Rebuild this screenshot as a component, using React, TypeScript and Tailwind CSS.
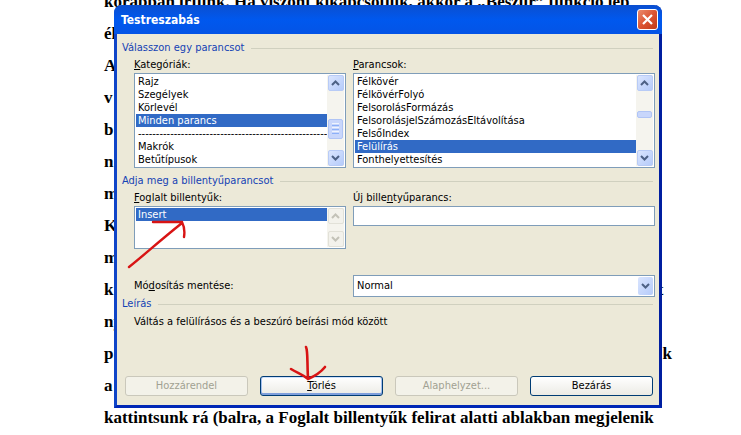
import { useState, type ReactNode } from "react";

const documentLines = [
  { start: "korábban írtunk. Ha viszont kikapcsoljuk, akkor a „Beszúr” funkció lép", end: "" },
  { start: "él", end: "" },
  { start: "A", end: "" },
  { start: "v", end: "" },
  { start: "b", end: "" },
  { start: "n", end: "" },
  { start: "m", end: "" },
  { start: "K", end: "" },
  { start: "m", end: "" },
  { start: "k", end: "t\u00a0\u00a0" },
  { start: "ny", end: "" },
  { start: "p", end: "k" },
  { start: "a", end: "" },
  { start: "kattintsunk rá (balra, a Foglalt billentyűk felirat alatti ablakban megjelenik", end: "" },
];

const categories = [
  "Rajz",
  "Szegélyek",
  "Körlevél",
  "Minden parancs",
  "-----------------------------------------------------",
  "Makrók",
  "Betűtípusok",
];

const commands = [
  "Félkövér",
  "FélkövérFolyó",
  "FelsorolásFormázás",
  "FelsorolásjelSzámozásEltávolítása",
  "FelsőIndex",
  "Felülírás",
  "Fonthelyettesítés",
];

function Chevron({ up = false, muted = false }: { up?: boolean; muted?: boolean }) {
  return (
    <svg viewBox="0 0 9 6" className={`h-[6px] w-[9px] ${up ? "rotate-180" : ""}`} aria-hidden="true">
      <path d="M1 1 L4.5 4.5 L8 1" fill="none" stroke={muted ? "#c3c2b8" : "#4d6185"} strokeWidth="2" />
    </svg>
  );
}

function ScrollButton({ up = false, disabled = false }: { up?: boolean; disabled?: boolean }) {
  return (
    <button
      type="button"
      disabled={disabled}
      aria-label={up ? "Fel" : "Le"}
      className={`flex h-4 w-4 shrink-0 items-center justify-center rounded-xs border ${
        disabled ? "border-[#e2e1d8] bg-[#f3f2ec]" : "border-[#b8cbf6] bg-linear-to-br from-[#dae5fe] to-[#b5cbfa]"
      }`}
    >
      <Chevron up={up} muted={disabled} />
    </button>
  );
}

type ListBoxProps = {
  id: string;
  items: string[];
  initial: string;
  rows: number;
  disabled?: boolean;
  thumb?: ReactNode;
};

function ListBox({ id, items, initial, rows, disabled = false, thumb }: ListBoxProps) {
  const [value, setValue] = useState(initial);

  return (
    <div className="flex border border-[#7f9db9] bg-white p-px">
      <select
        id={id}
        size={rows}
        value={value}
        onChange={(e) => setValue(e.target.value)}
        className="block min-w-0 flex-1 self-start overflow-hidden bg-white p-0 outline-none [scrollbar-width:none]"
      >
        {items.map((item) => (
          <option
            key={item}
            value={item}
            className="h-[13px] min-h-0 overflow-hidden p-0 pl-[2px] leading-[13px] checked:bg-linear-to-r checked:from-[#316ac5] checked:to-[#316ac5] checked:text-white"
          >
            {item}
          </option>
        ))}
      </select>
      <div className="flex w-[17px] flex-col items-center justify-between bg-[#f5f4ee]">
        <ScrollButton up disabled={disabled} />
        {thumb}
        <ScrollButton disabled={disabled} />
      </div>
    </div>
  );
}

function GroupTitle({ children }: { children: ReactNode }) {
  return (
    <div className="flex h-[14px] items-center gap-[7px] pr-[6px] pl-[5px] text-[#1442b4]">
      <h2>{children}</h2>
      <span className="h-px flex-1 bg-[#d0d0bf]" />
    </div>
  );
}

function PushButton({ children, disabled = false, primary = false }: { children: ReactNode; disabled?: boolean; primary?: boolean }) {
  const look = disabled
    ? "border-[#cac8bb] bg-[#f3f2e9] text-[#a1a192]"
    : primary
      ? "border-[#003c74] bg-linear-to-b from-white to-[#ecebe5] shadow-[inset_0_-2px_0_#7f9fdc,inset_1px_0_0_#a5c0ee,inset_-1px_0_0_#a5c0ee,inset_0_1px_0_#cee0fb]"
      : "border-[#003c74] bg-linear-to-b from-white to-[#ecebe5]";

  return (
    <button type="button" disabled={disabled} className={`h-5 flex-1 rounded-[3px] border leading-4 ${look}`}>
      {children}
    </button>
  );
}

export default function App() {
  const [target, setTarget] = useState("Normal");

  return (
    <main className="relative h-screen overflow-hidden bg-white">
      <div className="-mt-[14px] pr-[69px] pl-[104px] font-['Liberation_Serif',serif] text-[17px] leading-8 font-bold whitespace-nowrap text-black">
        {documentLines.map((line, i) => (
          <p key={i} className="flex justify-between">
            <span>{line.start}</span>
            <span>{line.end}</span>
          </p>
        ))}
      </div>

      <section
        role="dialog"
        aria-labelledby="dialog-title"
        className="absolute top-[5px] right-[79px] left-[114px] rounded-t-lg border-r-[3px] border-b-[3px] border-l-[3px] border-[#0f45c8] border-r-[#001ea0] border-b-[#0027b5] bg-[#ece9d8] font-['DejaVu_Sans_Condensed','DejaVu_Sans',sans-serif] text-[11px] leading-[14px] text-black"
      >
        <header className="-mx-[3px] flex h-[29px] items-center justify-between rounded-t-lg bg-linear-to-b from-[#0a4fd0] via-[#0058ee] to-[#0454e6] pr-1 pl-[7px] text-white">
          <h1 id="dialog-title" className="text-[12px] font-bold">
            Testreszabás
          </h1>
          <button
            type="button"
            aria-label="Bezárás"
            className="flex h-[21px] w-[21px] items-center justify-center rounded-[3px] border border-white bg-linear-to-br from-[#e98a6c] via-[#dc5432] to-[#c03a18]"
          >
            <svg viewBox="0 0 11 11" className="h-[11px] w-[11px]" aria-hidden="true">
              <path d="M1 1 L10 10 M10 1 L1 10" stroke="white" strokeWidth="2.2" />
            </svg>
          </button>
        </header>

        <form className="pt-[7px] pb-[9px]" onSubmit={(e) => e.preventDefault()}>
          <GroupTitle>Válasszon egy parancsot</GroupTitle>
          <div className="mt-[2px] grid grid-cols-[212px_1fr] gap-x-[7px] pr-1 pl-[17px]">
            <label htmlFor="categories" className="leading-4">
              <u>K</u>ategóriák:
            </label>
            <label htmlFor="commands" className="leading-4">
              <u>P</u>arancsok:
            </label>
            <ListBox
              id="categories"
              items={categories}
              initial="Minden parancs"
              rows={7}
              thumb={
                <div className="mt-[16px] flex h-5 w-[15px] flex-col items-center justify-center gap-px rounded-xs border border-[#b0c4f5] bg-[#c8d6fb]">
                  <span className="h-px w-[7px] bg-[#eef4fe]" />
                  <span className="h-px w-[7px] bg-[#8cb0f8]" />
                  <span className="h-px w-[7px] bg-[#eef4fe]" />
                  <span className="h-px w-[7px] bg-[#8cb0f8]" />
                  <span className="h-px w-[7px] bg-[#eef4fe]" />
                  <span className="h-px w-[7px] bg-[#8cb0f8]" />
                </div>
              }
            />
            <ListBox
              id="commands"
              items={commands}
              initial="Felülírás"
              rows={7}
              thumb={<div className="-mt-[12px] h-[7px] w-[15px] rounded-xs border border-[#b0c4f5] bg-[#c8d6fb]" />}
            />
          </div>

          <div className="mt-[6px]">
            <GroupTitle>Adja meg a billentyűparancsot</GroupTitle>
          </div>
          <div className="mt-[2px] grid grid-cols-[212px_1fr] gap-x-[7px] pr-1 pl-[17px]">
            <div className="flex flex-col">
              <label htmlFor="current-keys" className="leading-4">
                <u>F</u>oglalt billentyűk:
              </label>
              <ListBox id="current-keys" items={["Insert"]} initial="Insert" rows={3} disabled />
            </div>
            <div className="flex flex-col">
              <label htmlFor="new-key" className="leading-4">
                Új bille<u>n</u>tyűparancs:
              </label>
              <input id="new-key" type="text" className="h-5 border border-[#7f9db9] bg-white px-1 outline-none" />
            </div>
          </div>

          <div className="mt-[26px] grid grid-cols-[212px_1fr] items-center gap-x-[7px] pr-1 pl-[17px]">
            <label htmlFor="save-in">
              Mó<u>d</u>osítás mentése:
            </label>
            <div className="relative">
              <select
                id="save-in"
                value={target}
                onChange={(e) => setTarget(e.target.value)}
                className="block h-[22px] w-full appearance-none border border-[#7f9db9] bg-white pl-[3px] outline-none"
              >
                <option>Normal</option>
              </select>
              <span className="pointer-events-none absolute inset-y-[2px] right-[2px] flex w-[15px] items-center justify-center rounded-xs bg-linear-to-br from-[#dae5fe] to-[#b5cbfa]">
                <Chevron />
              </span>
            </div>
          </div>

          <GroupTitle>Leírás</GroupTitle>
          <p className="mt-1 h-[61px] pl-[17px]">Váltás a felülírásos és a beszúró beírási mód között</p>

          <div className="flex gap-3 pr-[6px] pl-2">
            <PushButton disabled>Hozzárendel</PushButton>
            <PushButton primary>
              <u>T</u>örlés
            </PushButton>
            <PushButton disabled>Alaphelyzet...</PushButton>
            <PushButton>Bezárás</PushButton>
          </div>
        </form>
      </section>

      {/* Hand-drawn pointers */}
      <svg viewBox="0 0 64 52" className="pointer-events-none absolute top-[218px] left-[125px] h-[52px] w-[64px]" aria-hidden="true">
        <path d="M4 49 C18 38 32 25 57 5 M28 4 L57 4 C59 8 60 13 59 19" fill="none" stroke="#d81414" strokeWidth="2.4" strokeLinecap="round" />
      </svg>
      <svg viewBox="0 0 42 38" className="pointer-events-none absolute top-[345px] left-[287px] h-[38px] w-[42px]" aria-hidden="true">
        <path d="M19 2 C21 6 20 16 21 34 M4 24 C10 28 15 29 21 34 C28 31 34 27 38 22" fill="none" stroke="#d81414" strokeWidth="2.6" strokeLinecap="round" />
      </svg>
    </main>
  );
}
